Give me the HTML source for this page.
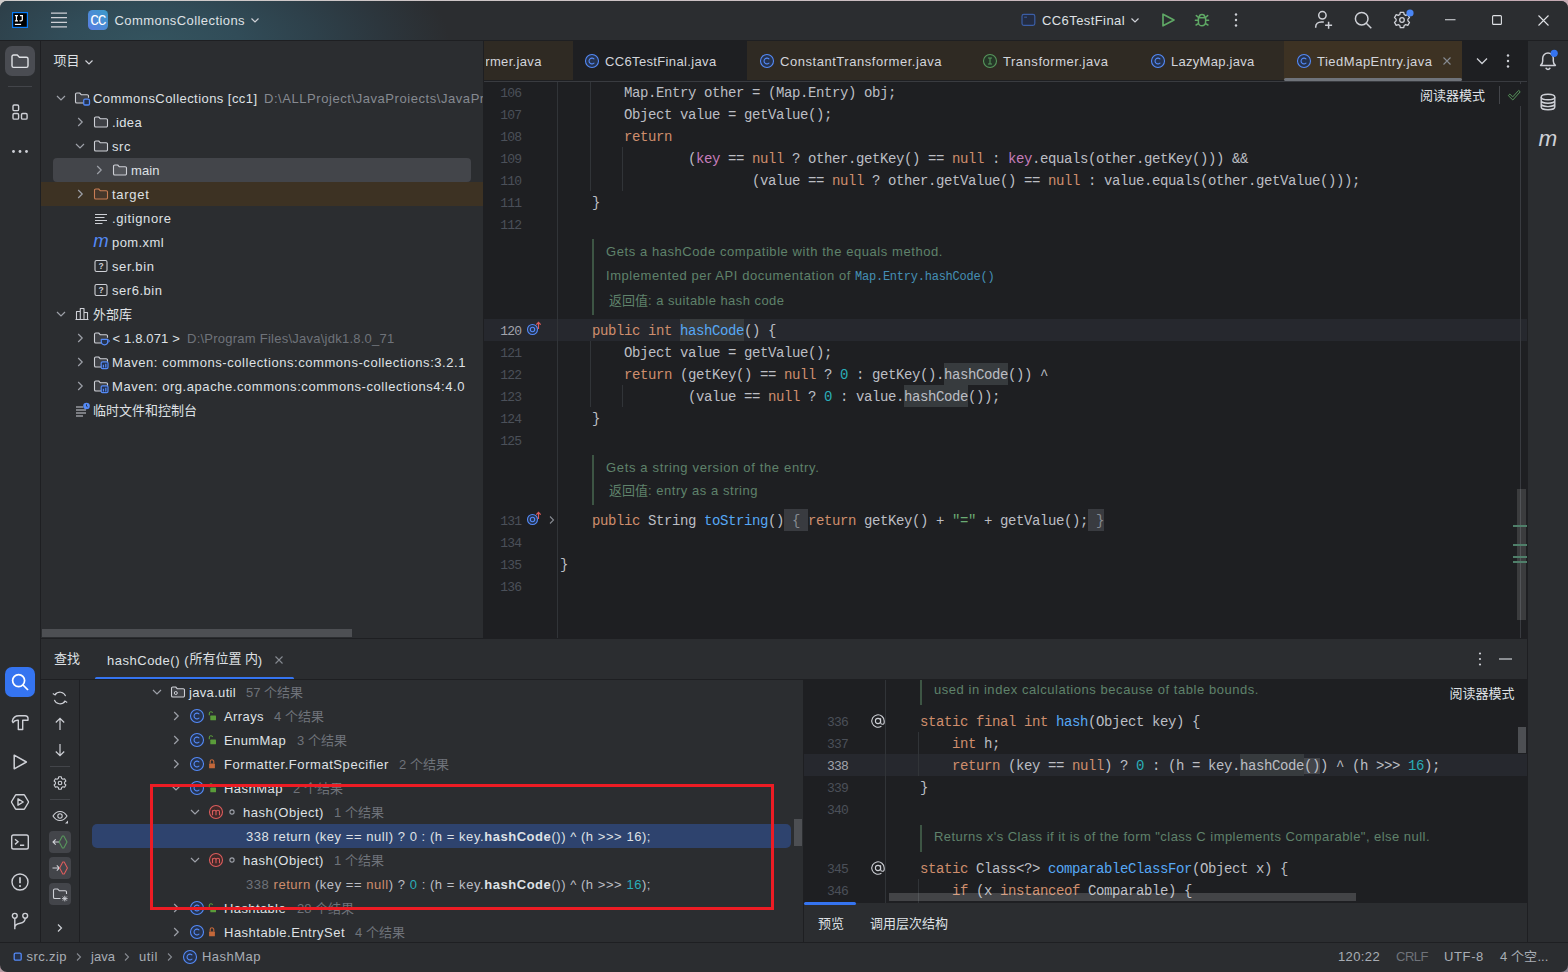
<!DOCTYPE html>
<html><head><meta charset="utf-8"><title>IDE</title><style>
html,body{margin:0;padding:0}
body{width:1568px;height:972px;background:linear-gradient(90deg,#d0cdcc 0,#cbbfc2 50%,#c4a9b2 100%) top/100% 8px no-repeat, linear-gradient(90deg,#b39aa2 0,#8c8292 100%);position:relative;overflow:hidden;font-family:"Liberation Sans", sans-serif;font-size:13px;color:#dfe1e5}
.t{position:absolute;white-space:pre;}
.s{font-family:"Liberation Sans", sans-serif}
.c{font-family:"Liberation Sans", "Noto Sans CJK SC", sans-serif;font-size:13px;line-height:20px}
.m{font-family:"Liberation Mono", monospace}
svg{overflow:visible}
.m i{display:inline-block;width:8px;text-align:center;font-style:normal} .m u{display:inline-block;width:6.975px;text-align:center;text-decoration:none}
.k{color:#cf8e6d} .f{color:#56a8f5} .n{color:#2aacb8} .st{color:#6aab73} .fl{color:#c77dbb}
.hl{background:#373b3e;padding:4px 0 2px} .hlw{background:#383b3d;padding:4px 0 2px} .fp{background:#393b40;color:#868a91;padding:4px 0 2px}
#win{position:absolute;left:0;top:0;width:1568px;height:972px;background:#2b2d30;clip-path:inset(1px 0 0 0 round 7px)}
</style></head><body><div id="win">
<div style="position:absolute;left:0px;top:0px;width:1568px;height:40px;background:radial-gradient(ellipse 300px 130px at 150px 46px,#34545f 0%,#314c58 30%,#2e414b 55%,#2c363d 78%,#2b2d30 100%);"></div>
<div style="position:absolute;left:0px;top:40px;width:1568px;height:1px;background:#1e1f22;"></div>
<div style="position:absolute;left:40px;top:41px;width:1px;height:901px;background:#1e1f22;"></div>
<div style="position:absolute;left:1527px;top:41px;width:1px;height:901px;background:#1e1f22;"></div>
<div style="position:absolute;left:484px;top:41px;width:1043px;height:597px;background:#1e1f22;"></div>
<div style="position:absolute;left:483px;top:41px;width:1px;height:597px;background:#1e1f22;"></div>
<div style="position:absolute;left:41px;top:638px;width:1487px;height:1px;background:#1e1f22;"></div>
<div style="position:absolute;left:0px;top:942px;width:1568px;height:1px;background:#1e1f22;"></div>
<svg style="position:absolute;left:12px;top:12px;" width="16" height="16" viewBox="0 0 16 16" fill="none"><rect x="0.600" y="0.600" width="14.800" height="14.800" fill="#000" stroke="#087cfa" stroke-width="1.200"/><path d="M2.900 3.600h3.100M4.450 3.600v5.200M2.900 8.800h3.100M7.900 3.600h3.100M10.300 3.600v3.800a1.400 1.400 0 0 1-1.400 1.400H7.500" stroke="#fff" stroke-width="1.200"/><rect x="2.900" y="11.800" width="6.200" height="1.200" fill="#fff"/></svg>
<svg style="position:absolute;left:51px;top:12px;" width="16" height="16" viewBox="0 0 16 16" fill="none"><path d="M0 1.100h16M0 5.700h16M0 10.300h16M0 14.900h16" stroke="#ced0d6" stroke-width="1.300"/></svg>
<div style="position:absolute;left:88px;top:10px;width:20px;height:20px;border-radius:4.5px;background:linear-gradient(45deg,#5a7de3,#3b9bc8)"></div>
<span id="t1" class="t m" style="left:90.3px;top:10.600000000000001px;line-height:20px;font-size:14.5px;color:#fff;letter-spacing:-1.203px;">CC</span>
<span id="t2" class="t s" style="left:114.5px;top:10.5px;line-height:20px;font-size:13px;color:#dfe1e5;letter-spacing:0.426px;">CommonsCollections</span>
<svg style="position:absolute;left:249px;top:14px;" width="12" height="12" viewBox="0 0 12 12" fill="none"><path d="M2.5 4.5l3.5 3.5 3.5-3.5" stroke="#ced0d6" stroke-width="1.2"/></svg>
<svg style="position:absolute;left:1021px;top:13px;" width="16" height="14" viewBox="0 0 16 14" fill="none"><rect x="1" y="1.400" width="12.800" height="11" rx="1.800" stroke="#3b5ea6" stroke-width="1.200" fill="#232c42"/><path d="M3.200 4.200h2.800" stroke="#3b5ea6" stroke-width="1"/></svg>
<span id="t3" class="t s" style="left:1042px;top:10.5px;line-height:20px;font-size:13px;color:#dfe1e5;letter-spacing:0.414px;">CC6TestFinal</span>
<svg style="position:absolute;left:1129px;top:14px;" width="12" height="12" viewBox="0 0 12 12" fill="none"><path d="M2.500 4.500l3.500 3.500 3.500-3.500" stroke="#ced0d6" stroke-width="1.200"/></svg>
<svg style="position:absolute;left:1160px;top:12px;" width="16" height="16" viewBox="0 0 16 16" fill="none"><path d="M3 2.200v11.600l11-5.800z" stroke="#5fa865" stroke-width="1.700" stroke-linejoin="round"/></svg>
<svg style="position:absolute;left:1194px;top:12px;" width="16" height="16" viewBox="0 0 16 16" fill="none"><path d="M5.300 5.200a2.700 2.700 0 0 1 5.400 0M4.400 5.700h7.200v4.500a3.600 3.600 0 0 1-7.200 0zM4.400 8.200H1.400M11.600 8.200h3M4.700 11.300l-2.600 1.700M11.300 11.300l2.600 1.700M4.600 5.500L2.300 3.600M11.400 5.500l2.300-1.900" stroke="#5fa865" stroke-width="1.500" stroke-linejoin="round" stroke-linecap="round"/></svg>
<svg style="position:absolute;left:1234px;top:13px;" width="4" height="14" viewBox="0 0 4 14" fill="none"><circle cx="2" cy="1.5" r="1.2" fill="#ced0d6"/><circle cx="2" cy="7" r="1.2" fill="#ced0d6"/><circle cx="2" cy="12.5" r="1.2" fill="#ced0d6"/></svg>
<svg style="position:absolute;left:1313px;top:10px;" width="20" height="20" viewBox="0 0 20 20" fill="none"><circle cx="9.400" cy="5.300" r="3.700" stroke="#ced0d6" stroke-width="1.500"/><path d="M2.700 17.800v-.8c0-3 2.300-5 5.600-5h2.500M15.600 11.800v7M12.100 15.300h7" stroke="#ced0d6" stroke-width="1.500"/></svg>
<svg style="position:absolute;left:1353px;top:10px;" width="20" height="20" viewBox="0 0 20 20" fill="none"><circle cx="8.700" cy="8.700" r="6.300" stroke="#ced0d6" stroke-width="1.500"/><path d="M13.300 13.300l5 5" stroke="#ced0d6" stroke-width="1.500"/></svg>
<svg style="position:absolute;left:1392px;top:10px;" width="20" height="20" viewBox="0 0 20 20" fill="none"><path d="M8.3 2.3h3.4l.5 2.2 1.5.9 2.1-.7 1.7 2.9-1.6 1.5v1.8l1.6 1.5-1.7 2.9-2.1-.7-1.5.9-.5 2.2H8.3l-.5-2.2-1.5-.9-2.1.7-1.7-2.9 1.6-1.5V9.100l-1.6-1.5 1.700-2.900 2.100.7 1.500-.9z" stroke="#ced0d6" stroke-width="1.3" stroke-linejoin="round"/><circle cx="10" cy="10" r="2.3" stroke="#ced0d6" stroke-width="1.3"/></svg>
<svg style="position:absolute;left:1405.7px;top:9.4px;" width="8" height="8" viewBox="0 0 8 8" fill="none"><circle cx="4" cy="4" r="3.600" fill="#4a86f5"/></svg>
<svg style="position:absolute;left:1445px;top:19px;" width="11" height="2" viewBox="0 0 11 2" fill="none"><path d="M0 .7h10.5" stroke="#dfe1e5" stroke-width="1.1"/></svg>
<svg style="position:absolute;left:1492px;top:15px;" width="10" height="10" viewBox="0 0 10 10" fill="none"><rect x=".6" y=".6" width="8.800" height="8.800" rx="1" stroke="#dfe1e5" stroke-width="1.100"/></svg>
<svg style="position:absolute;left:1538px;top:15px;" width="11" height="11" viewBox="0 0 11 11" fill="none"><path d="M.5.5l10 10M10.500.5l-10 10" stroke="#dfe1e5" stroke-width="1.100"/></svg>
<div style="position:absolute;left:5px;top:46px;width:30px;height:30px;border-radius:7px;background:#4a4c52"></div>
<svg style="position:absolute;left:10px;top:51px;" width="20" height="20" viewBox="0 0 20 20" fill="none"><path d="M2 5.600a1.600 1.600 0 0 1 1.600-1.600h3.700l2.100 2.200h7a1.600 1.600 0 0 1 1.600 1.600v7a1.600 1.600 0 0 1-1.600 1.600H3.600A1.600 1.600 0 0 1 2 14.800z" stroke="#dfe1e5" stroke-width="1.400" stroke-linejoin="round"/></svg>
<div style="position:absolute;left:8px;top:86px;width:24px;height:1px;background:#43454a;"></div>
<svg style="position:absolute;left:10px;top:102px;" width="20" height="20" viewBox="0 0 20 20" fill="none"><rect x="3" y="3" width="5.600" height="5.600" rx="1.200" stroke="#ced0d6" stroke-width="1.400"/><rect x="3" y="11.500" width="5.600" height="5.600" rx="1.200" stroke="#ced0d6" stroke-width="1.400"/><rect x="11.500" y="11.500" width="5.600" height="5.600" rx="1.200" stroke="#ced0d6" stroke-width="1.400"/></svg>
<svg style="position:absolute;left:10px;top:141px;" width="20" height="20" viewBox="0 0 20 20" fill="none"><circle cx="3.500" cy="10.500" r="1.400" fill="#ced0d6"/><circle cx="10" cy="10.500" r="1.400" fill="#ced0d6"/><circle cx="16.500" cy="10.500" r="1.400" fill="#ced0d6"/></svg>
<div style="position:absolute;left:5px;top:667px;width:30px;height:30px;border-radius:7px;background:#3574f0"></div>
<svg style="position:absolute;left:10px;top:672px;" width="20" height="20" viewBox="0 0 20 20" fill="none"><circle cx="8.600" cy="8.600" r="6" stroke="#fff" stroke-width="1.700"/><path d="M13 13l5 5" stroke="#fff" stroke-width="1.700"/></svg>
<svg style="position:absolute;left:10px;top:712px;" width="20" height="20" viewBox="0 0 20 20" fill="none"><path d="M2.300 9.200C3 5.800 5.600 3.800 9 3.800h6.300c1.500 0 2.400.800 2.700 2.200v2.300h-5.300v9.200H8.300V8.300H7.200c-1.800 0-3.300.900-4.100 2.300z" stroke="#ced0d6" stroke-width="1.400" stroke-linejoin="round"/></svg>
<svg style="position:absolute;left:10px;top:752px;" width="20" height="20" viewBox="0 0 20 20" fill="none"><path d="M4.200 3.200v13.600L16.400 10z" stroke="#ced0d6" stroke-width="1.500" stroke-linejoin="round"/></svg>
<svg style="position:absolute;left:10px;top:792px;" width="20" height="20" viewBox="0 0 20 20" fill="none"><path d="M6.200 2.800h7.600a1 1 0 0 1 .87.500l3.700 6.200a1 1 0 0 1 0 1l-3.700 6.200a1 1 0 0 1-.87.500H6.200a1 1 0 0 1-.87-.500L1.630 10.500a1 1 0 0 1 0-1l3.700-6.200a1 1 0 0 1 .87-.500z" stroke="#ced0d6" stroke-width="1.400"/><path d="M8 6.800v6.400l5.200-3.200z" stroke="#ced0d6" stroke-width="1.400" stroke-linejoin="round"/></svg>
<svg style="position:absolute;left:10px;top:832px;" width="20" height="20" viewBox="0 0 20 20" fill="none"><rect x="1.700" y="3" width="16.600" height="14" rx="1.800" stroke="#ced0d6" stroke-width="1.400"/><path d="M5 7.200l3 2.600-3 2.600M10 13.200h4.200" stroke="#ced0d6" stroke-width="1.400"/></svg>
<svg style="position:absolute;left:10px;top:872px;" width="20" height="20" viewBox="0 0 20 20" fill="none"><circle cx="10" cy="10" r="8" stroke="#ced0d6" stroke-width="1.400"/><path d="M10 5.200v6" stroke="#ced0d6" stroke-width="1.700"/><circle cx="10" cy="14" r="1.100" fill="#ced0d6"/></svg>
<svg style="position:absolute;left:10px;top:911px;" width="20" height="20" viewBox="0 0 20 20" fill="none"><circle cx="4.800" cy="4.800" r="2.400" stroke="#ced0d6" stroke-width="1.400"/><circle cx="15.200" cy="4.800" r="2.400" stroke="#ced0d6" stroke-width="1.400"/><path d="M4.800 7.200v11M15.200 7.200c0 3.500-2 4.500-5 5-3 .500-5.400 1.200-5.400 4" stroke="#ced0d6" stroke-width="1.400"/></svg>
<span class="t c" style="left:53.5px;top:51.2px;color:#dfe1e5;">项目</span>
<svg style="position:absolute;left:83px;top:56px;" width="12" height="12" viewBox="0 0 12 12" fill="none"><path d="M2.500 4.500l3.500 3.500 3.500-3.500" stroke="#ced0d6" stroke-width="1.200"/></svg>
<div style="position:absolute;left:53px;top:158px;width:418px;height:24px;border-radius:4px;background:#43454a"></div>
<div style="position:absolute;left:41px;top:182px;width:442px;height:24px;background:#3d3223;"></div>
<svg style="position:absolute;left:53px;top:90px;" width="16" height="16" viewBox="0 0 16 16" fill="none"><path d="M4 6l4 4 4-4" stroke="#9da0a8" stroke-width="1.200"/></svg>
<svg style="position:absolute;left:74px;top:90px;" width="16" height="16" viewBox="0 0 16 16" fill="none"><path d="M1.500 4.300a1.300 1.300 0 0 1 1.300-1.300h2.900l1.700 1.800h5.800a1.300 1.300 0 0 1 1.300 1.300v6.900h-13z" fill="#3e4045"/><path d="M9.500 13H2.800a1.300 1.300 0 0 1-1.300-1.300V4.300A1.300 1.300 0 0 1 2.800 3h2.900l1.700 1.800h5.800a1.300 1.300 0 0 1 1.300 1.300v1.600" stroke="#ced0d6" stroke-width="1.100" stroke-linejoin="round"/><rect x="9.700" y="9.200" width="5.800" height="5.800" rx="1.300" stroke="#548af7" stroke-width="1.300" fill="#25324d"/></svg>
<span id="t4" class="t s" style="left:93px;top:89.0px;line-height:20px;font-size:13px;color:#dfe1e5;letter-spacing:0.442px;">CommonsCollections [cc1]</span>
<span id="t5" class="t s" style="left:264px;top:89.0px;line-height:20px;font-size:13px;color:#868a91;letter-spacing:0.559px;clip-path:inset(0 13px 0 0);">D:\ALLProject\JavaProiects\JavaProj</span>
<svg style="position:absolute;left:72px;top:114px;" width="16" height="16" viewBox="0 0 16 16" fill="none"><path d="M6.200 4l4 4-4 4" stroke="#9da0a8" stroke-width="1.200"/></svg>
<svg style="position:absolute;left:93px;top:114px;" width="16" height="16" viewBox="0 0 16 16" fill="none"><path d="M1.500 4.300a1.300 1.300 0 0 1 1.300-1.300h2.900l1.700 1.800h5.800a1.300 1.300 0 0 1 1.300 1.300v5.600a1.300 1.300 0 0 1-1.300 1.300H2.800a1.300 1.300 0 0 1-1.300-1.300z" stroke="#ced0d6" stroke-width="1.100" stroke-linejoin="round" fill="#3e4045"/></svg>
<span id="t6" class="t s" style="left:112px;top:113.0px;line-height:20px;font-size:13px;color:#dfe1e5;letter-spacing:0.359px;">.idea</span>
<svg style="position:absolute;left:72px;top:138px;" width="16" height="16" viewBox="0 0 16 16" fill="none"><path d="M4 6l4 4 4-4" stroke="#9da0a8" stroke-width="1.200"/></svg>
<svg style="position:absolute;left:93px;top:138px;" width="16" height="16" viewBox="0 0 16 16" fill="none"><path d="M1.500 4.300a1.300 1.300 0 0 1 1.300-1.300h2.900l1.700 1.800h5.800a1.300 1.300 0 0 1 1.300 1.300v5.600a1.300 1.300 0 0 1-1.300 1.300H2.800a1.300 1.300 0 0 1-1.300-1.300z" stroke="#ced0d6" stroke-width="1.100" stroke-linejoin="round" fill="#3e4045"/></svg>
<span id="t7" class="t s" style="left:112px;top:137.0px;line-height:20px;font-size:13px;color:#dfe1e5;letter-spacing:0.552px;">src</span>
<svg style="position:absolute;left:91px;top:162px;" width="16" height="16" viewBox="0 0 16 16" fill="none"><path d="M6.200 4l4 4-4 4" stroke="#9da0a8" stroke-width="1.200"/></svg>
<svg style="position:absolute;left:112px;top:162px;" width="16" height="16" viewBox="0 0 16 16" fill="none"><path d="M1.500 4.300a1.300 1.300 0 0 1 1.300-1.300h2.900l1.700 1.800h5.800a1.300 1.300 0 0 1 1.300 1.300v5.600a1.300 1.300 0 0 1-1.300 1.300H2.800a1.300 1.300 0 0 1-1.300-1.300z" stroke="#ced0d6" stroke-width="1.100" stroke-linejoin="round" fill="#53555a"/></svg>
<span id="t8" class="t s" style="left:131px;top:161.0px;line-height:20px;font-size:13px;color:#dfe1e5;letter-spacing:0.078px;">main</span>
<svg style="position:absolute;left:72px;top:186px;" width="16" height="16" viewBox="0 0 16 16" fill="none"><path d="M6.200 4l4 4-4 4" stroke="#9da0a8" stroke-width="1.200"/></svg>
<svg style="position:absolute;left:93px;top:186px;" width="16" height="16" viewBox="0 0 16 16" fill="none"><path d="M1.500 4.300a1.300 1.300 0 0 1 1.300-1.300h2.900l1.700 1.800h5.800a1.300 1.300 0 0 1 1.300 1.300v5.600a1.300 1.300 0 0 1-1.300 1.300H2.800a1.300 1.300 0 0 1-1.300-1.300z" stroke="#c77d55" stroke-width="1.100" stroke-linejoin="round" fill="#45372b"/></svg>
<span id="t9" class="t s" style="left:112px;top:185.0px;line-height:20px;font-size:13px;color:#dfe1e5;letter-spacing:0.708px;">target</span>
<svg style="position:absolute;left:93px;top:210px;" width="16" height="16" viewBox="0 0 16 16" fill="none"><path d="M2 4.500h12M2 7.500h9.500M2 10.500h12M2 13.500h7.500" stroke="#ced0d6" stroke-width="1"/></svg>
<span id="t10" class="t s" style="left:112px;top:209.0px;line-height:20px;font-size:13px;color:#dfe1e5;letter-spacing:0.602px;">.gitignore</span>
<span id="t11" class="t s" style="left:93.3px;top:231.3px;line-height:20px;font-size:18.5px;color:#548af7;letter-spacing:0.078px;font-style:italic;">m</span>
<span id="t12" class="t s" style="left:112px;top:233.0px;line-height:20px;font-size:13px;color:#dfe1e5;letter-spacing:0.411px;">pom.xml</span>
<svg style="position:absolute;left:93px;top:258px;" width="16" height="16" viewBox="0 0 16 16" fill="none"><rect x="2" y="2.500" width="12" height="11" rx="1.500" stroke="#ced0d6" stroke-width="1.100"/><text x="5.400" y="11.300" font-family="Liberation Sans" font-weight="bold" font-size="8.500" fill="#ced0d6">?</text></svg>
<span id="t13" class="t s" style="left:112px;top:257.0px;line-height:20px;font-size:13px;color:#dfe1e5;letter-spacing:0.598px;">ser.bin</span>
<svg style="position:absolute;left:93px;top:282px;" width="16" height="16" viewBox="0 0 16 16" fill="none"><rect x="2" y="2.500" width="12" height="11" rx="1.500" stroke="#ced0d6" stroke-width="1.100"/><text x="5.400" y="11.300" font-family="Liberation Sans" font-weight="bold" font-size="8.500" fill="#ced0d6">?</text></svg>
<span id="t14" class="t s" style="left:112px;top:281.0px;line-height:20px;font-size:13px;color:#dfe1e5;letter-spacing:0.531px;">ser6.bin</span>
<svg style="position:absolute;left:53px;top:306px;" width="16" height="16" viewBox="0 0 16 16" fill="none"><path d="M4 6l4 4 4-4" stroke="#9da0a8" stroke-width="1.200"/></svg>
<svg style="position:absolute;left:74px;top:306px;" width="16" height="16" viewBox="0 0 16 16" fill="none"><path d="M2.500 13.500v-8h3.800v8M6.300 13.500V2.500h3.700v11M10 13.500V6.500h3.500v7M1.500 13.500h13" stroke="#ced0d6" stroke-width="1.100" stroke-linejoin="round"/></svg>
<span class="t c" style="left:93px;top:304.7px;color:#dfe1e5;">外部库</span>
<svg style="position:absolute;left:72px;top:330px;" width="16" height="16" viewBox="0 0 16 16" fill="none"><path d="M6.200 4l4 4-4 4" stroke="#9da0a8" stroke-width="1.200"/></svg>
<svg style="position:absolute;left:93px;top:330px;" width="16" height="16" viewBox="0 0 16 16" fill="none"><path d="M1.500 4.300a1.300 1.300 0 0 1 1.300-1.300h2.900l1.700 1.800h5.800a1.300 1.300 0 0 1 1.300 1.300v6.900h-13z" fill="#3e4045"/><path d="M9.500 13H2.800a1.300 1.300 0 0 1-1.300-1.300V4.300A1.300 1.300 0 0 1 2.800 3h2.900l1.700 1.800h5.800a1.300 1.300 0 0 1 1.300 1.300v1.600" stroke="#ced0d6" stroke-width="1.100" stroke-linejoin="round"/><path d="M8.300 9.300h6.400v2.300a3.200 3.200 0 0 1-6.400 0z" stroke="#548af7" stroke-width="1.200" fill="#25324d" stroke-linejoin="round"/><path d="M14.700 10h.7a1 1 0 0 1 0 2h-.7" stroke="#548af7" stroke-width="1"/></svg>
<span id="t15" class="t s" style="left:112.5px;top:329.0px;line-height:20px;font-size:13px;color:#dfe1e5;letter-spacing:0.156px;">&lt; 1.8.071 &gt;</span>
<span id="t16" class="t s" style="left:187px;top:329.0px;line-height:20px;font-size:13px;color:#6f737a;letter-spacing:0.244px;">D:\Program Files\Java\jdk1.8.0_71</span>
<svg style="position:absolute;left:72px;top:354px;" width="16" height="16" viewBox="0 0 16 16" fill="none"><path d="M6.200 4l4 4-4 4" stroke="#9da0a8" stroke-width="1.200"/></svg>
<svg style="position:absolute;left:93px;top:354px;" width="16" height="16" viewBox="0 0 16 16" fill="none"><path d="M1.500 4.300a1.300 1.300 0 0 1 1.300-1.300h2.900l1.700 1.800h5.800a1.300 1.300 0 0 1 1.300 1.300v6.900h-13z" fill="#3e4045"/><path d="M9.500 13H2.800a1.300 1.300 0 0 1-1.300-1.300V4.300A1.300 1.300 0 0 1 2.800 3h2.900l1.700 1.800h5.800a1.300 1.300 0 0 1 1.300 1.300v1.600" stroke="#ced0d6" stroke-width="1.100" stroke-linejoin="round"/><rect x="8.200" y="7.800" width="6.800" height="6.800" rx="1.300" stroke="#548af7" stroke-width="1.200" fill="#25324d"/><path d="M10.400 10.800v2.600M12.800 9.700v3.700" stroke="#548af7" stroke-width="1.200"/></svg>
<span id="t17" class="t s" style="left:112px;top:353.0px;line-height:20px;font-size:13px;color:#dfe1e5;letter-spacing:0.555px;">Maven: commons-collections:commons-collections:3.2.1</span>
<svg style="position:absolute;left:72px;top:378px;" width="16" height="16" viewBox="0 0 16 16" fill="none"><path d="M6.200 4l4 4-4 4" stroke="#9da0a8" stroke-width="1.200"/></svg>
<svg style="position:absolute;left:93px;top:378px;" width="16" height="16" viewBox="0 0 16 16" fill="none"><path d="M1.500 4.300a1.300 1.300 0 0 1 1.300-1.300h2.900l1.700 1.800h5.800a1.300 1.300 0 0 1 1.300 1.300v6.900h-13z" fill="#3e4045"/><path d="M9.500 13H2.800a1.300 1.300 0 0 1-1.300-1.300V4.300A1.300 1.300 0 0 1 2.800 3h2.900l1.700 1.800h5.800a1.300 1.300 0 0 1 1.300 1.300v1.600" stroke="#ced0d6" stroke-width="1.100" stroke-linejoin="round"/><rect x="8.200" y="7.800" width="6.800" height="6.800" rx="1.300" stroke="#548af7" stroke-width="1.200" fill="#25324d"/><path d="M10.400 10.800v2.600M12.800 9.700v3.700" stroke="#548af7" stroke-width="1.200"/></svg>
<span id="t18" class="t s" style="left:112px;top:377.0px;line-height:20px;font-size:13px;color:#dfe1e5;letter-spacing:0.557px;">Maven: org.apache.commons:commons-collections4:4.0</span>
<svg style="position:absolute;left:74px;top:402px;" width="16" height="16" viewBox="0 0 16 16" fill="none"><path d="M2 5h7M2 8h10M2 11h10M2 14h7" stroke="#ced0d6" stroke-width="1.100"/><circle cx="12.500" cy="4" r="3.300" fill="#548af7"/><path d="M12.500 2.300v1.900l1.200.7" stroke="#2b2d30" stroke-width=".9"/></svg>
<span class="t c" style="left:93px;top:400.7px;color:#dfe1e5;">临时文件和控制台</span>
<div style="position:absolute;left:42px;top:629px;width:310px;height:8px;background:#4d4f53;"></div>
<div style="position:absolute;left:484px;top:41px;width:89px;height:39px;background:#2f2a23;"></div>
<div style="position:absolute;left:747px;top:41px;width:537px;height:39px;background:#2f2a23;"></div>
<div style="position:absolute;left:1284px;top:41px;width:178px;height:39px;background:#3d3223;"></div>
<div style="position:absolute;left:484px;top:81px;width:1043px;height:1px;background:#393b40;"></div>
<div style="position:absolute;left:1284px;top:78px;width:178px;height:3px;background:#6f737a;border-radius:1.500px"></div>
<span id="t19" class="t s" style="left:485.3px;top:52.0px;line-height:20px;font-size:13px;color:#d3d5db;letter-spacing:0.326px;clip-path:inset(0 0 0 0.7px);">rmer.java</span>
<svg style="position:absolute;left:583.5px;top:53px;" width="16" height="16" viewBox="0 0 16 16" fill="none"><circle cx="8" cy="8" r="6.500" stroke="#548af7" stroke-width="1.100" fill="#25324d"/><path d="M10.300 6.300a2.900 2.900 0 1 0 0 3.400" stroke="#548af7" stroke-width="1.100"/></svg>
<span id="t20" class="t s" style="left:605px;top:52.0px;line-height:20px;font-size:13px;color:#d3d5db;letter-spacing:0.353px;">CC6TestFinal.java</span>
<svg style="position:absolute;left:759px;top:53px;" width="16" height="16" viewBox="0 0 16 16" fill="none"><circle cx="8" cy="8" r="6.500" stroke="#548af7" stroke-width="1.100" fill="#25324d"/><path d="M10.300 6.300a2.900 2.900 0 1 0 0 3.400" stroke="#548af7" stroke-width="1.100"/></svg>
<span id="t21" class="t s" style="left:780px;top:52.0px;line-height:20px;font-size:13px;color:#d3d5db;letter-spacing:0.538px;">ConstantTransformer.java</span>
<svg style="position:absolute;left:982px;top:53px;" width="16" height="16" viewBox="0 0 16 16" fill="none"><circle cx="8" cy="8" r="6.500" stroke="#57965c" stroke-width="1.100" fill="#253627"/><path d="M8 5v6M6 5h4M6 11h4" stroke="#57965c" stroke-width="1.100"/></svg>
<span id="t22" class="t s" style="left:1003px;top:52.0px;line-height:20px;font-size:13px;color:#d3d5db;letter-spacing:0.527px;">Transformer.java</span>
<svg style="position:absolute;left:1150px;top:53px;" width="16" height="16" viewBox="0 0 16 16" fill="none"><circle cx="8" cy="8" r="6.500" stroke="#548af7" stroke-width="1.100" fill="#25324d"/><path d="M10.300 6.300a2.900 2.900 0 1 0 0 3.400" stroke="#548af7" stroke-width="1.100"/></svg>
<span id="t23" class="t s" style="left:1171px;top:52.0px;line-height:20px;font-size:13px;color:#d3d5db;letter-spacing:0.273px;">LazyMap.java</span>
<svg style="position:absolute;left:1296px;top:53px;" width="16" height="16" viewBox="0 0 16 16" fill="none"><circle cx="8" cy="8" r="6.500" stroke="#548af7" stroke-width="1.100" fill="#25324d"/><path d="M10.300 6.300a2.900 2.900 0 1 0 0 3.400" stroke="#548af7" stroke-width="1.100"/></svg>
<span id="t24" class="t s" style="left:1317px;top:52.0px;line-height:20px;font-size:13px;color:#d3d5db;letter-spacing:0.504px;">TiedMapEntry.java</span>
<svg style="position:absolute;left:1442px;top:56px;" width="10" height="10" viewBox="0 0 10 10" fill="none"><path d="M1.500 1.500l7 7M8.500 1.500l-7 7" stroke="#868a91" stroke-width="1.100"/></svg>
<svg style="position:absolute;left:1474px;top:53px;" width="16" height="16" viewBox="0 0 16 16" fill="none"><path d="M3 5.500l5 5 5-5" stroke="#ced0d6" stroke-width="1.300"/></svg>
<svg style="position:absolute;left:1506px;top:54px;" width="4" height="14" viewBox="0 0 4 14" fill="none"><circle cx="2" cy="1.500" r="1.200" fill="#ced0d6"/><circle cx="2" cy="7" r="1.200" fill="#ced0d6"/><circle cx="2" cy="12.500" r="1.200" fill="#ced0d6"/></svg>
<div style="position:absolute;left:484px;top:319px;width:1043px;height:22px;background:#26282e;"></div>
<div style="position:absolute;left:557px;top:82px;width:1px;height:556px;background:#313438;"></div>
<div style="position:absolute;left:1520px;top:82px;width:1px;height:556px;background:#393b40;"></div>
<div style="position:absolute;left:590px;top:82px;width:1px;height:109px;background:#313438;"></div>
<div style="position:absolute;left:622px;top:147px;width:1px;height:44px;background:#313438;"></div>
<div style="position:absolute;left:590px;top:341px;width:1px;height:66px;background:#313438;"></div>
<div style="position:absolute;left:622px;top:385px;width:1px;height:22px;background:#313438;"></div>
<div style="position:absolute;left:592px;top:239px;width:2px;height:76px;background:#3d5544;"></div>
<div style="position:absolute;left:592px;top:455px;width:2px;height:50px;background:#3d5544;"></div>
<span id="t25" class="t m" style="left:491.20000000000005px;top:83.5px;line-height:20px;font-size:13px;color:#4b5059;width:30px;text-align:right;letter-spacing:-0.800px;">106</span>
<span id="t26" class="t m" style="left:560px;top:81.5px;line-height:22px;font-size:14px;color:#bcbec4;"><i> </i><i> </i><i> </i><i> </i><i> </i><i> </i><i> </i><i> </i><i>M</i><i>a</i><i>p</i><i>.</i><i>E</i><i>n</i><i>t</i><i>r</i><i>y</i><i> </i><i>o</i><i>t</i><i>h</i><i>e</i><i>r</i><i> </i><i>=</i><i> </i><i>(</i><i>M</i><i>a</i><i>p</i><i>.</i><i>E</i><i>n</i><i>t</i><i>r</i><i>y</i><i>)</i><i> </i><i>o</i><i>b</i><i>j</i><i>;</i></span>
<span id="t27" class="t m" style="left:491.20000000000005px;top:105.5px;line-height:20px;font-size:13px;color:#4b5059;width:30px;text-align:right;letter-spacing:-0.800px;">107</span>
<span id="t28" class="t m" style="left:560px;top:103.5px;line-height:22px;font-size:14px;color:#bcbec4;"><i> </i><i> </i><i> </i><i> </i><i> </i><i> </i><i> </i><i> </i><i>O</i><i>b</i><i>j</i><i>e</i><i>c</i><i>t</i><i> </i><i>v</i><i>a</i><i>l</i><i>u</i><i>e</i><i> </i><i>=</i><i> </i><i>g</i><i>e</i><i>t</i><i>V</i><i>a</i><i>l</i><i>u</i><i>e</i><i>(</i><i>)</i><i>;</i></span>
<span id="t29" class="t m" style="left:491.20000000000005px;top:127.5px;line-height:20px;font-size:13px;color:#4b5059;width:30px;text-align:right;letter-spacing:-0.800px;">108</span>
<span id="t30" class="t m" style="left:560px;top:125.5px;line-height:22px;font-size:14px;color:#bcbec4;"><i> </i><i> </i><i> </i><i> </i><i> </i><i> </i><i> </i><i> </i><span class="k"><i>r</i><i>e</i><i>t</i><i>u</i><i>r</i><i>n</i></span></span>
<span id="t31" class="t m" style="left:491.20000000000005px;top:149.5px;line-height:20px;font-size:13px;color:#4b5059;width:30px;text-align:right;letter-spacing:-0.800px;">109</span>
<span id="t32" class="t m" style="left:560px;top:147.5px;line-height:22px;font-size:14px;color:#bcbec4;"><i> </i><i> </i><i> </i><i> </i><i> </i><i> </i><i> </i><i> </i><i> </i><i> </i><i> </i><i> </i><i> </i><i> </i><i> </i><i> </i><i>(</i><span class="fl"><i>k</i><i>e</i><i>y</i></span><i> </i><i>=</i><i>=</i><i> </i><span class="k"><i>n</i><i>u</i><i>l</i><i>l</i></span><i> </i><i>?</i><i> </i><i>o</i><i>t</i><i>h</i><i>e</i><i>r</i><i>.</i><i>g</i><i>e</i><i>t</i><i>K</i><i>e</i><i>y</i><i>(</i><i>)</i><i> </i><i>=</i><i>=</i><i> </i><span class="k"><i>n</i><i>u</i><i>l</i><i>l</i></span><i> </i><i>:</i><i> </i><span class="fl"><i>k</i><i>e</i><i>y</i></span><i>.</i><i>e</i><i>q</i><i>u</i><i>a</i><i>l</i><i>s</i><i>(</i><i>o</i><i>t</i><i>h</i><i>e</i><i>r</i><i>.</i><i>g</i><i>e</i><i>t</i><i>K</i><i>e</i><i>y</i><i>(</i><i>)</i><i>)</i><i>)</i><i> </i><i>&amp;</i><i>&amp;</i></span>
<span id="t33" class="t m" style="left:491.20000000000005px;top:171.5px;line-height:20px;font-size:13px;color:#4b5059;width:30px;text-align:right;letter-spacing:-0.800px;">110</span>
<span id="t34" class="t m" style="left:560px;top:169.5px;line-height:22px;font-size:14px;color:#bcbec4;"><i> </i><i> </i><i> </i><i> </i><i> </i><i> </i><i> </i><i> </i><i> </i><i> </i><i> </i><i> </i><i> </i><i> </i><i> </i><i> </i><i> </i><i> </i><i> </i><i> </i><i> </i><i> </i><i> </i><i> </i><i>(</i><i>v</i><i>a</i><i>l</i><i>u</i><i>e</i><i> </i><i>=</i><i>=</i><i> </i><span class="k"><i>n</i><i>u</i><i>l</i><i>l</i></span><i> </i><i>?</i><i> </i><i>o</i><i>t</i><i>h</i><i>e</i><i>r</i><i>.</i><i>g</i><i>e</i><i>t</i><i>V</i><i>a</i><i>l</i><i>u</i><i>e</i><i>(</i><i>)</i><i> </i><i>=</i><i>=</i><i> </i><span class="k"><i>n</i><i>u</i><i>l</i><i>l</i></span><i> </i><i>:</i><i> </i><i>v</i><i>a</i><i>l</i><i>u</i><i>e</i><i>.</i><i>e</i><i>q</i><i>u</i><i>a</i><i>l</i><i>s</i><i>(</i><i>o</i><i>t</i><i>h</i><i>e</i><i>r</i><i>.</i><i>g</i><i>e</i><i>t</i><i>V</i><i>a</i><i>l</i><i>u</i><i>e</i><i>(</i><i>)</i><i>)</i><i>)</i><i>;</i></span>
<span id="t35" class="t m" style="left:491.20000000000005px;top:193.5px;line-height:20px;font-size:13px;color:#4b5059;width:30px;text-align:right;letter-spacing:-0.800px;">111</span>
<span id="t36" class="t m" style="left:560px;top:191.5px;line-height:22px;font-size:14px;color:#bcbec4;"><i> </i><i> </i><i> </i><i> </i><i>}</i></span>
<span id="t37" class="t m" style="left:491.20000000000005px;top:215.5px;line-height:20px;font-size:13px;color:#4b5059;width:30px;text-align:right;letter-spacing:-0.800px;">112</span>
<span id="t38" class="t s" style="left:606px;top:242.0px;line-height:20px;font-size:13px;color:#5f826b;letter-spacing:0.568px;">Gets a hashCode compatible with the equals method.</span>
<span id="t39" class="t s" style="left:606px;top:266.0px;line-height:20px;font-size:13px;color:#5f826b;letter-spacing:0.558px;">Implemented per API documentation of </span>
<span id="t40" class="t m" style="left:855px;top:266.5px;line-height:20px;font-size:12px;color:#4590b5;"><u>M</u><u>a</u><u>p</u><u>.</u><u>E</u><u>n</u><u>t</u><u>r</u><u>y</u><u>.</u><u>h</u><u>a</u><u>s</u><u>h</u><u>C</u><u>o</u><u>d</u><u>e</u><u>(</u><u>)</u></span>
<span class="t c" style="left:609px;top:290.7px;color:#5f826b;">返回值</span>
<span id="t41" class="t s" style="left:648px;top:291.0px;line-height:20px;font-size:13px;color:#5f826b;letter-spacing:0.455px;">: a suitable hash code</span>
<span id="t42" class="t m" style="left:491.20000000000005px;top:321.5px;line-height:20px;font-size:13px;color:#a1a3ab;width:30px;text-align:right;letter-spacing:-0.800px;">120</span>
<span id="t43" class="t m" style="left:560px;top:319.5px;line-height:22px;font-size:14px;color:#bcbec4;"><i> </i><i> </i><i> </i><i> </i><span class="k"><i>p</i><i>u</i><i>b</i><i>l</i><i>i</i><i>c</i></span><i> </i><span class="k"><i>i</i><i>n</i><i>t</i></span><i> </i><span class="hlw"><span class="f"><i>h</i><i>a</i><i>s</i><i>h</i><i>C</i><i>o</i><i>d</i><i>e</i></span></span><i>(</i><i>)</i><i> </i><i>{</i></span>
<span id="t44" class="t m" style="left:491.20000000000005px;top:343.5px;line-height:20px;font-size:13px;color:#4b5059;width:30px;text-align:right;letter-spacing:-0.800px;">121</span>
<span id="t45" class="t m" style="left:560px;top:341.5px;line-height:22px;font-size:14px;color:#bcbec4;"><i> </i><i> </i><i> </i><i> </i><i> </i><i> </i><i> </i><i> </i><i>O</i><i>b</i><i>j</i><i>e</i><i>c</i><i>t</i><i> </i><i>v</i><i>a</i><i>l</i><i>u</i><i>e</i><i> </i><i>=</i><i> </i><i>g</i><i>e</i><i>t</i><i>V</i><i>a</i><i>l</i><i>u</i><i>e</i><i>(</i><i>)</i><i>;</i></span>
<span id="t46" class="t m" style="left:491.20000000000005px;top:365.5px;line-height:20px;font-size:13px;color:#4b5059;width:30px;text-align:right;letter-spacing:-0.800px;">122</span>
<span id="t47" class="t m" style="left:560px;top:363.5px;line-height:22px;font-size:14px;color:#bcbec4;"><i> </i><i> </i><i> </i><i> </i><i> </i><i> </i><i> </i><i> </i><span class="k"><i>r</i><i>e</i><i>t</i><i>u</i><i>r</i><i>n</i></span><i> </i><i>(</i><i>g</i><i>e</i><i>t</i><i>K</i><i>e</i><i>y</i><i>(</i><i>)</i><i> </i><i>=</i><i>=</i><i> </i><span class="k"><i>n</i><i>u</i><i>l</i><i>l</i></span><i> </i><i>?</i><i> </i><span class="n"><i>0</i></span><i> </i><i>:</i><i> </i><i>g</i><i>e</i><i>t</i><i>K</i><i>e</i><i>y</i><i>(</i><i>)</i><i>.</i><span class="hl"><i>h</i><i>a</i><i>s</i><i>h</i><i>C</i><i>o</i><i>d</i><i>e</i></span><i>(</i><i>)</i><i>)</i><i> </i><i>^</i></span>
<span id="t48" class="t m" style="left:491.20000000000005px;top:387.5px;line-height:20px;font-size:13px;color:#4b5059;width:30px;text-align:right;letter-spacing:-0.800px;">123</span>
<span id="t49" class="t m" style="left:560px;top:385.5px;line-height:22px;font-size:14px;color:#bcbec4;"><i> </i><i> </i><i> </i><i> </i><i> </i><i> </i><i> </i><i> </i><i> </i><i> </i><i> </i><i> </i><i> </i><i> </i><i> </i><i> </i><i>(</i><i>v</i><i>a</i><i>l</i><i>u</i><i>e</i><i> </i><i>=</i><i>=</i><i> </i><span class="k"><i>n</i><i>u</i><i>l</i><i>l</i></span><i> </i><i>?</i><i> </i><span class="n"><i>0</i></span><i> </i><i>:</i><i> </i><i>v</i><i>a</i><i>l</i><i>u</i><i>e</i><i>.</i><span class="hl"><i>h</i><i>a</i><i>s</i><i>h</i><i>C</i><i>o</i><i>d</i><i>e</i></span><i>(</i><i>)</i><i>)</i><i>;</i></span>
<span id="t50" class="t m" style="left:491.20000000000005px;top:409.5px;line-height:20px;font-size:13px;color:#4b5059;width:30px;text-align:right;letter-spacing:-0.800px;">124</span>
<span id="t51" class="t m" style="left:560px;top:407.5px;line-height:22px;font-size:14px;color:#bcbec4;"><i> </i><i> </i><i> </i><i> </i><i>}</i></span>
<span id="t52" class="t m" style="left:491.20000000000005px;top:431.5px;line-height:20px;font-size:13px;color:#4b5059;width:30px;text-align:right;letter-spacing:-0.800px;">125</span>
<span id="t53" class="t s" style="left:606px;top:458.0px;line-height:20px;font-size:13px;color:#5f826b;letter-spacing:0.657px;">Gets a string version of the entry.</span>
<span class="t c" style="left:609px;top:480.7px;color:#5f826b;">返回值</span>
<span id="t54" class="t s" style="left:648px;top:481.0px;line-height:20px;font-size:13px;color:#5f826b;letter-spacing:0.541px;">: entry as a string</span>
<span id="t55" class="t m" style="left:491.20000000000005px;top:511.5px;line-height:20px;font-size:13px;color:#4b5059;width:30px;text-align:right;letter-spacing:-0.800px;">131</span>
<span id="t56" class="t m" style="left:560px;top:509.5px;line-height:22px;font-size:14px;color:#bcbec4;"><i> </i><i> </i><i> </i><i> </i><span class="k"><i>p</i><i>u</i><i>b</i><i>l</i><i>i</i><i>c</i></span><i> </i><i>S</i><i>t</i><i>r</i><i>i</i><i>n</i><i>g</i><i> </i><span class="f"><i>t</i><i>o</i><i>S</i><i>t</i><i>r</i><i>i</i><i>n</i><i>g</i></span><i>(</i><i>)</i><span class="fp"><i> </i><i>{</i><i> </i></span><span class="k"><i>r</i><i>e</i><i>t</i><i>u</i><i>r</i><i>n</i></span><i> </i><i>g</i><i>e</i><i>t</i><i>K</i><i>e</i><i>y</i><i>(</i><i>)</i><i> </i><i>+</i><i> </i><span class="st"><i>&quot;</i><i>=</i><i>&quot;</i></span><i> </i><i>+</i><i> </i><i>g</i><i>e</i><i>t</i><i>V</i><i>a</i><i>l</i><i>u</i><i>e</i><i>(</i><i>)</i><i>;</i><span class="fp"><i> </i><i>}</i></span></span>
<span id="t57" class="t m" style="left:491.20000000000005px;top:533.5px;line-height:20px;font-size:13px;color:#4b5059;width:30px;text-align:right;letter-spacing:-0.800px;">134</span>
<span id="t58" class="t m" style="left:491.20000000000005px;top:555.5px;line-height:20px;font-size:13px;color:#4b5059;width:30px;text-align:right;letter-spacing:-0.800px;">135</span>
<span id="t59" class="t m" style="left:560px;top:553.5px;line-height:22px;font-size:14px;color:#bcbec4;"><i>}</i></span>
<span id="t60" class="t m" style="left:491.20000000000005px;top:577.5px;line-height:20px;font-size:13px;color:#4b5059;width:30px;text-align:right;letter-spacing:-0.800px;">136</span>
<svg style="position:absolute;left:526px;top:321px;" width="16" height="16" viewBox="0 0 16 16" fill="none"><circle cx="6.500" cy="8.500" r="5" stroke="#548af7" stroke-width="1.100" fill="#25324d"/><circle cx="6.500" cy="8.500" r="2.200" stroke="#548af7" stroke-width="1.100"/><path d="M12.500 8V1.500M10.300 3.600l2.200-2.300 2.200 2.300" stroke="#db5c5c" stroke-width="1.200"/></svg>
<svg style="position:absolute;left:526px;top:511px;" width="16" height="16" viewBox="0 0 16 16" fill="none"><circle cx="6.500" cy="8.500" r="5" stroke="#548af7" stroke-width="1.100" fill="#25324d"/><circle cx="6.500" cy="8.500" r="2.200" stroke="#548af7" stroke-width="1.100"/><path d="M12.500 8V1.500M10.300 3.600l2.200-2.300 2.200 2.300" stroke="#db5c5c" stroke-width="1.200"/></svg>
<svg style="position:absolute;left:544px;top:512px;" width="16" height="16" viewBox="0 0 16 16" fill="none"><path d="M6 4.500l3.500 3.500-3.500 3.500" stroke="#868a91" stroke-width="1.100"/></svg>
<span class="t c" style="left:1420px;top:85.7px;color:#dfe1e5;">阅读器模式</span>
<div style="position:absolute;left:1499px;top:86px;width:1px;height:18px;background:#43454a;"></div>
<div style="position:absolute;left:1503px;top:84px;width:24px;height:22px;background:#1e1f22;"></div>
<svg style="position:absolute;left:1507px;top:88px;" width="14" height="14" viewBox="0 0 14 14" fill="none"><path d="M1.300 7.600l1.500-1.500 2.900 2.800 6-6.500 1.500 1.400-7.400 8.200z" stroke="#57965c" stroke-width="1" stroke-linejoin="round"/></svg>
<div style="position:absolute;left:1517px;top:489px;width:9px;height:131px;background:rgba(255,255,255,0.130);"></div>
<div style="position:absolute;left:1513px;top:525px;width:14px;height:2px;background:#4f7f6a;"></div>
<div style="position:absolute;left:1513px;top:544px;width:14px;height:2px;background:#4f7f6a;"></div>
<div style="position:absolute;left:1513px;top:556px;width:14px;height:2px;background:#4f7f6a;"></div>
<div style="position:absolute;left:1513px;top:561px;width:14px;height:2px;background:#4f7f6a;"></div>
<svg style="position:absolute;left:1538px;top:50px;" width="20" height="20" viewBox="0 0 20 20" fill="none"><path d="M2.600 15.400c1.400-1.100 2.100-2.500 2.100-4.500V8.300a5.300 5.300 0 0 1 10.600 0v2.600c0 2 .700 3.400 2.100 4.500zM7.800 17.800a2.300 2.300 0 0 0 4.400 0" stroke="#ced0d6" stroke-width="1.500" stroke-linejoin="round"/><circle cx="16.200" cy="3.300" r="3.600" fill="#3574f0"/></svg>
<svg style="position:absolute;left:1538px;top:91.5px;" width="20" height="20" viewBox="0 0 20 20" fill="none"><ellipse cx="10" cy="5" rx="6.800" ry="2.800" stroke="#ced0d6" stroke-width="1.400"/><path d="M3.200 5v10c0 1.500 3 2.800 6.800 2.800s6.800-1.300 6.800-2.800V5M3.200 8.400c0 1.500 3 2.800 6.800 2.800s6.800-1.300 6.800-2.800M3.200 11.800c0 1.500 3 2.800 6.800 2.800s6.800-1.300 6.800-2.800" stroke="#ced0d6" stroke-width="1.400"/></svg>
<span id="t61" class="t s" style="left:1538.5px;top:126.5px;line-height:24px;font-size:22.5px;color:#ced0d6;letter-spacing:0.250px;font-style:italic;">m</span>
<span class="t c" style="left:54px;top:649.2px;color:#dfe1e5;">查找</span>
<span id="t62" class="t s" style="left:107px;top:650.5px;line-height:20px;font-size:13px;color:#dfe1e5;letter-spacing:0.510px;">hashCode() (</span>
<span class="t c" style="left:189.4px;top:649.4px;color:#dfe1e5;">所有位置 内</span>
<span id="t63" class="t s" style="left:257.8px;top:650.5px;line-height:20px;font-size:13px;color:#dfe1e5;">)</span>
<svg style="position:absolute;left:274px;top:655px;" width="10" height="10" viewBox="0 0 10 10" fill="none"><path d="M1.500 1.500l7 7M8.500 1.500l-7 7" stroke="#868a91" stroke-width="1.100"/></svg>
<div style="position:absolute;left:95px;top:677px;width:199px;height:3px;border-radius:1.500px;background:#3574f0"></div>
<div style="position:absolute;left:41px;top:679px;width:1487px;height:1px;background:#1e1f22;"></div>
<svg style="position:absolute;left:1478px;top:652px;" width="4" height="14" viewBox="0 0 4 14" fill="none"><circle cx="2" cy="1.500" r="1.100" fill="#ced0d6"/><circle cx="2" cy="7" r="1.100" fill="#ced0d6"/><circle cx="2" cy="12.500" r="1.100" fill="#ced0d6"/></svg>
<svg style="position:absolute;left:1499px;top:658px;" width="14" height="2" viewBox="0 0 14 2" fill="none"><path d="M0 1h13" stroke="#ced0d6" stroke-width="1.200"/></svg>
<div style="position:absolute;left:79px;top:680px;width:1px;height:262px;background:#1e1f22;"></div>
<svg style="position:absolute;left:52px;top:690px;" width="16" height="16" viewBox="0 0 16 16" fill="none"><path d="M13.600 6.200A5.900 5.900 0 0 0 3.200 4.600M2.400 9.800a5.900 5.900 0 0 0 10.400 1.600" stroke="#ced0d6" stroke-width="1.100"/><path d="M.800 3.600l2.300 1.300 1.400-2.200M15.200 12.400l-2.300-1.300-1.400 2.200" stroke="#ced0d6" stroke-width="1.100"/></svg>
<svg style="position:absolute;left:52px;top:716px;" width="16" height="16" viewBox="0 0 16 16" fill="none"><path d="M8 14V2.500M3.800 6.500L8 2.300l4.200 4.200" stroke="#ced0d6" stroke-width="1.200"/></svg>
<svg style="position:absolute;left:52px;top:742px;" width="16" height="16" viewBox="0 0 16 16" fill="none"><path d="M8 2v11.500M3.800 9.500L8 13.700l4.200-4.200" stroke="#ced0d6" stroke-width="1.200"/></svg>
<div style="position:absolute;left:50px;top:766px;width:20px;height:1px;background:#43454a;"></div>
<svg style="position:absolute;left:52px;top:775px;" width="16" height="16" viewBox="0 0 16 16" fill="none"><path d="M6.700 1.800h2.600l.4 1.800 1.200.7 1.700-.6 1.300 2.300-1.300 1.200v1.600l1.300 1.200-1.300 2.300-1.700-.6-1.200.7-.4 1.800H6.700l-.4-1.800-1.200-.7-1.700.6-1.300-2.300 1.300-1.200V7.200L2.100 6l1.300-2.300 1.700.6 1.200-.7z" stroke="#ced0d6" stroke-width="1.100" stroke-linejoin="round"/><circle cx="8" cy="8" r="1.800" stroke="#ced0d6" stroke-width="1.100"/></svg>
<div style="position:absolute;left:50px;top:799px;width:20px;height:1px;background:#43454a;"></div>
<svg style="position:absolute;left:52px;top:808px;" width="16" height="16" viewBox="0 0 16 16" fill="none"><path d="M1 8c1.800-3 4.200-4.500 7-4.500s5.200 1.500 7 4.500c-1.800 3-4.200 4.500-7 4.500S2.800 11 1 8z" stroke="#ced0d6" stroke-width="1.100"/><circle cx="8" cy="8" r="2.200" stroke="#ced0d6" stroke-width="1.100"/><path d="M16 12.500v3h-3z" fill="#ced0d6"/></svg>
<div style="position:absolute;left:49px;top:831px;width:22px;height:22px;border-radius:4px;background:#43454a"></div>
<div style="position:absolute;left:49px;top:857px;width:22px;height:22px;border-radius:4px;background:#43454a"></div>
<div style="position:absolute;left:49px;top:883px;width:22px;height:22px;border-radius:4px;background:#43454a"></div>
<svg style="position:absolute;left:52px;top:834px;" width="16" height="16" viewBox="0 0 16 16" fill="none"><path d="M1 8h7M3.700 5.300L1 8l2.700 2.700" stroke="#ced0d6" stroke-width="1.100"/><path d="M10.400 2h1.400l3.200 6-3.200 6h-1.400L7.200 8z" stroke="#57965c" stroke-width="1.100" stroke-linejoin="round"/></svg>
<svg style="position:absolute;left:52px;top:860px;" width="16" height="16" viewBox="0 0 16 16" fill="none"><path d="M.500 8h7M4.800 5.300L7.500 8l-2.700 2.700" stroke="#ced0d6" stroke-width="1.100"/><path d="M10.800 2h1.400l3.200 6-3.200 6h-1.400L7.600 8z" stroke="#db5c5c" stroke-width="1.100" stroke-linejoin="round"/></svg>
<svg style="position:absolute;left:52px;top:886px;" width="16" height="16" viewBox="0 0 16 16" fill="none"><path d="M8.500 12.500H2.800a1.300 1.300 0 0 1-1.300-1.300V4.300A1.300 1.300 0 0 1 2.800 3h2.900l1.700 1.800h5.800a1.300 1.300 0 0 1 1.300 1.300v2" stroke="#ced0d6" stroke-width="1.100"/><path d="M12.800 9.800v5.600M10 12.600h5.600M10.800 10.600l4 4M14.800 10.600l-4 4" stroke="#ced0d6" stroke-width=".9"/></svg>
<svg style="position:absolute;left:52px;top:920px;" width="16" height="16" viewBox="0 0 16 16" fill="none"><path d="M6 4.500l3.500 3.500-3.500 3.500" stroke="#ced0d6" stroke-width="1.200"/></svg>
<div style="position:absolute;left:92px;top:824px;width:699px;height:24px;border-radius:5px;background:#2e436e"></div>
<svg style="position:absolute;left:149px;top:684px;" width="16" height="16" viewBox="0 0 16 16" fill="none"><path d="M4 6l4 4 4-4" stroke="#9da0a8" stroke-width="1.200"/></svg>
<svg style="position:absolute;left:170px;top:684px;" width="16" height="16" viewBox="0 0 16 16" fill="none"><path d="M1.500 4.300a1.300 1.300 0 0 1 1.300-1.300h2.900l1.700 1.800h5.800a1.300 1.300 0 0 1 1.300 1.300v5.600a1.300 1.300 0 0 1-1.300 1.300H2.800a1.300 1.300 0 0 1-1.300-1.300z" stroke="#ced0d6" stroke-width="1.100" stroke-linejoin="round" fill="#3e4045"/><circle cx="5.800" cy="9" r="1.500" stroke="#ced0d6" stroke-width="1"/></svg>
<span id="t64" class="t s" style="left:189px;top:683.0px;line-height:20px;font-size:13px;color:#dfe1e5;letter-spacing:0.325px;">java.util</span>
<span id="t65" class="t s" style="left:246px;top:683.0px;line-height:20px;font-size:13px;color:#6f737a;">57 </span>
<span class="t c" style="left:264px;top:682.7px;color:#6f737a;">个结果</span>
<svg style="position:absolute;left:168px;top:708px;" width="16" height="16" viewBox="0 0 16 16" fill="none"><path d="M6.200 4l4 4-4 4" stroke="#9da0a8" stroke-width="1.200"/></svg>
<svg style="position:absolute;left:189px;top:708px;" width="16" height="16" viewBox="0 0 16 16" fill="none"><circle cx="8" cy="8" r="6.500" stroke="#548af7" stroke-width="1.100" fill="#25324d"/><path d="M10.300 6.300a2.900 2.900 0 1 0 0 3.400" stroke="#548af7" stroke-width="1.100"/></svg>
<svg style="position:absolute;left:207px;top:710px;" width="10" height="12" viewBox="0 0 10 12" fill="none"><path d="M2.300 5.300V3.400a1.700 1.700 0 0 1 3.300-.5" stroke="#5a9c3a" stroke-width="1.100"/><rect x="3.300" y="5.600" width="5.700" height="4.700" rx=".6" fill="#5a9c3a"/></svg>
<span id="t66" class="t s" style="left:224px;top:707.0px;line-height:20px;font-size:13px;color:#dfe1e5;letter-spacing:0.406px;">Arrays</span>
<span id="t67" class="t s" style="left:274px;top:707.0px;line-height:20px;font-size:13px;color:#6f737a;">4 </span>
<span class="t c" style="left:285px;top:706.7px;color:#6f737a;">个结果</span>
<svg style="position:absolute;left:168px;top:732px;" width="16" height="16" viewBox="0 0 16 16" fill="none"><path d="M6.200 4l4 4-4 4" stroke="#9da0a8" stroke-width="1.200"/></svg>
<svg style="position:absolute;left:189px;top:732px;" width="16" height="16" viewBox="0 0 16 16" fill="none"><circle cx="8" cy="8" r="6.500" stroke="#548af7" stroke-width="1.100" fill="#25324d"/><path d="M10.300 6.300a2.900 2.900 0 1 0 0 3.400" stroke="#548af7" stroke-width="1.100"/></svg>
<svg style="position:absolute;left:207px;top:734px;" width="10" height="12" viewBox="0 0 10 12" fill="none"><path d="M2.300 5.300V3.400a1.700 1.700 0 0 1 3.300-.5" stroke="#5a9c3a" stroke-width="1.100"/><rect x="3.300" y="5.600" width="5.700" height="4.700" rx=".6" fill="#5a9c3a"/></svg>
<span id="t68" class="t s" style="left:224px;top:731.0px;line-height:20px;font-size:13px;color:#dfe1e5;letter-spacing:0.393px;">EnumMap</span>
<span id="t69" class="t s" style="left:297px;top:731.0px;line-height:20px;font-size:13px;color:#6f737a;">3 </span>
<span class="t c" style="left:308px;top:730.7px;color:#6f737a;">个结果</span>
<svg style="position:absolute;left:168px;top:756px;" width="16" height="16" viewBox="0 0 16 16" fill="none"><path d="M6.200 4l4 4-4 4" stroke="#9da0a8" stroke-width="1.200"/></svg>
<svg style="position:absolute;left:189px;top:756px;" width="16" height="16" viewBox="0 0 16 16" fill="none"><circle cx="8" cy="8" r="6.500" stroke="#548af7" stroke-width="1.100" fill="#25324d"/><path d="M10.300 6.300a2.900 2.900 0 1 0 0 3.400" stroke="#548af7" stroke-width="1.100"/></svg>
<svg style="position:absolute;left:207px;top:758px;" width="10" height="12" viewBox="0 0 10 12" fill="none"><path d="M3.200 5.500V3.600a1.800 1.800 0 0 1 3.600 0v1.900" stroke="#c4683a" stroke-width="1.100"/><rect x="2.100" y="5.600" width="5.800" height="4.700" rx=".6" fill="#c4683a"/></svg>
<span id="t70" class="t s" style="left:224px;top:755.0px;line-height:20px;font-size:13px;color:#dfe1e5;letter-spacing:0.560px;">Formatter.FormatSpecifier</span>
<span id="t71" class="t s" style="left:399px;top:755.0px;line-height:20px;font-size:13px;color:#6f737a;">2 </span>
<span class="t c" style="left:410px;top:754.7px;color:#6f737a;">个结果</span>
<svg style="position:absolute;left:168px;top:780px;" width="16" height="16" viewBox="0 0 16 16" fill="none"><path d="M4 6l4 4 4-4" stroke="#9da0a8" stroke-width="1.200"/></svg>
<svg style="position:absolute;left:189px;top:780px;" width="16" height="16" viewBox="0 0 16 16" fill="none"><circle cx="8" cy="8" r="6.500" stroke="#548af7" stroke-width="1.100" fill="#25324d"/><path d="M10.300 6.300a2.900 2.900 0 1 0 0 3.400" stroke="#548af7" stroke-width="1.100"/></svg>
<svg style="position:absolute;left:207px;top:782px;" width="10" height="12" viewBox="0 0 10 12" fill="none"><path d="M2.300 5.300V3.400a1.700 1.700 0 0 1 3.300-.5" stroke="#5a9c3a" stroke-width="1.100"/><rect x="3.300" y="5.600" width="5.700" height="4.700" rx=".6" fill="#5a9c3a"/></svg>
<span id="t72" class="t s" style="left:224px;top:779.0px;line-height:20px;font-size:13px;color:#dfe1e5;letter-spacing:0.480px;">HashMap</span>
<span id="t73" class="t s" style="left:293px;top:779.0px;line-height:20px;font-size:13px;color:#6f737a;">2 </span>
<span class="t c" style="left:304px;top:778.7px;color:#6f737a;">个结果</span>
<svg style="position:absolute;left:187px;top:804px;" width="16" height="16" viewBox="0 0 16 16" fill="none"><path d="M4 6l4 4 4-4" stroke="#9da0a8" stroke-width="1.200"/></svg>
<svg style="position:absolute;left:208px;top:804px;" width="16" height="16" viewBox="0 0 16 16" fill="none"><circle cx="8" cy="8" r="6.500" stroke="#db5c5c" stroke-width="1.100" fill="#402929"/><path d="M4.500 11.200V6.300M4.500 7.800c.400-2 3.500-2 3.500 0v3.400M8 7.800c.400-2 3.500-2 3.500 0v3.400" stroke="#db5c5c" stroke-width="1.100"/></svg>
<svg style="position:absolute;left:228px;top:808px;" width="8" height="8" viewBox="0 0 8 8" fill="none"><circle cx="4" cy="4" r="2.100" stroke="#9da0a8" stroke-width="1.100"/></svg>
<span id="t74" class="t s" style="left:243px;top:803.0px;line-height:20px;font-size:13px;color:#dfe1e5;letter-spacing:0.548px;">hash(Object)</span>
<span id="t75" class="t s" style="left:334px;top:803.0px;line-height:20px;font-size:13px;color:#6f737a;">1 </span>
<span class="t c" style="left:345px;top:802.7px;color:#6f737a;">个结果</span>
<span id="t76" class="t s" style="left:246px;top:827.0px;line-height:20px;font-size:13px;color:#dfe1e5;letter-spacing:0.549px;">338 return (key == null) ? 0 : (h = key.<b>hashCode</b>()) ^ (h &gt;&gt;&gt; 16);</span>
<svg style="position:absolute;left:187px;top:852px;" width="16" height="16" viewBox="0 0 16 16" fill="none"><path d="M4 6l4 4 4-4" stroke="#9da0a8" stroke-width="1.200"/></svg>
<svg style="position:absolute;left:208px;top:852px;" width="16" height="16" viewBox="0 0 16 16" fill="none"><circle cx="8" cy="8" r="6.500" stroke="#db5c5c" stroke-width="1.100" fill="#402929"/><path d="M4.500 11.200V6.300M4.500 7.800c.400-2 3.500-2 3.500 0v3.400M8 7.800c.400-2 3.500-2 3.500 0v3.400" stroke="#db5c5c" stroke-width="1.100"/></svg>
<svg style="position:absolute;left:228px;top:856px;" width="8" height="8" viewBox="0 0 8 8" fill="none"><circle cx="4" cy="4" r="2.100" stroke="#9da0a8" stroke-width="1.100"/></svg>
<span id="t77" class="t s" style="left:243px;top:851.0px;line-height:20px;font-size:13px;color:#dfe1e5;letter-spacing:0.548px;">hash(Object)</span>
<span id="t78" class="t s" style="left:334px;top:851.0px;line-height:20px;font-size:13px;color:#6f737a;">1 </span>
<span class="t c" style="left:345px;top:850.7px;color:#6f737a;">个结果</span>
<span id="t79" class="t s" style="left:246px;top:875.0px;line-height:20px;font-size:13px;color:#bcbec4;letter-spacing:0.548px;"><span style="color:#6f737a">338</span> <span class="k">return</span> (key == <span class="k">null</span>) ? <span class="n">0</span> : (h = key.<b style="color:#dfe1e5">hashCode</b>()) ^ (h &gt;&gt;&gt; <span class="n">16</span>);</span>
<svg style="position:absolute;left:168px;top:900px;" width="16" height="16" viewBox="0 0 16 16" fill="none"><path d="M6.200 4l4 4-4 4" stroke="#9da0a8" stroke-width="1.200"/></svg>
<svg style="position:absolute;left:189px;top:900px;" width="16" height="16" viewBox="0 0 16 16" fill="none"><circle cx="8" cy="8" r="6.500" stroke="#548af7" stroke-width="1.100" fill="#25324d"/><path d="M10.300 6.300a2.900 2.900 0 1 0 0 3.400" stroke="#548af7" stroke-width="1.100"/></svg>
<svg style="position:absolute;left:207px;top:902px;" width="10" height="12" viewBox="0 0 10 12" fill="none"><path d="M2.300 5.300V3.400a1.700 1.700 0 0 1 3.300-.5" stroke="#5a9c3a" stroke-width="1.100"/><rect x="3.300" y="5.600" width="5.700" height="4.700" rx=".6" fill="#5a9c3a"/></svg>
<span id="t80" class="t s" style="left:224px;top:899.0px;line-height:20px;font-size:13px;color:#dfe1e5;letter-spacing:0.384px;">Hashtable</span>
<span id="t81" class="t s" style="left:297px;top:899.0px;line-height:20px;font-size:13px;color:#6f737a;">28 </span>
<span class="t c" style="left:315px;top:898.7px;color:#6f737a;">个结果</span>
<svg style="position:absolute;left:168px;top:924px;" width="16" height="16" viewBox="0 0 16 16" fill="none"><path d="M6.200 4l4 4-4 4" stroke="#9da0a8" stroke-width="1.200"/></svg>
<svg style="position:absolute;left:189px;top:924px;" width="16" height="16" viewBox="0 0 16 16" fill="none"><circle cx="8" cy="8" r="6.500" stroke="#548af7" stroke-width="1.100" fill="#25324d"/><path d="M10.300 6.300a2.900 2.900 0 1 0 0 3.400" stroke="#548af7" stroke-width="1.100"/></svg>
<svg style="position:absolute;left:207px;top:926px;" width="10" height="12" viewBox="0 0 10 12" fill="none"><path d="M3.200 5.500V3.600a1.800 1.800 0 0 1 3.600 0v1.900" stroke="#c4683a" stroke-width="1.100"/><rect x="2.100" y="5.600" width="5.800" height="4.700" rx=".6" fill="#c4683a"/></svg>
<span id="t82" class="t s" style="left:224px;top:923.0px;line-height:20px;font-size:13px;color:#dfe1e5;letter-spacing:0.499px;">Hashtable.EntrySet</span>
<span id="t83" class="t s" style="left:355px;top:923.0px;line-height:20px;font-size:13px;color:#6f737a;">4 </span>
<span class="t c" style="left:366px;top:922.7px;color:#6f737a;">个结果</span>
<div style="position:absolute;left:794px;top:819px;width:8px;height:27px;background:#4d4f53;"></div>
<div style="position:absolute;left:150px;top:784px;width:624px;height:126px;box-sizing:border-box;border:3px solid #ed1c24"></div>
<div style="position:absolute;left:803px;top:680px;width:1px;height:262px;background:#1e1f22;"></div>
<div style="position:absolute;left:804px;top:680px;width:723px;height:223px;background:#1e1f22;"></div>
<div style="position:absolute;left:804px;top:754px;width:723px;height:22px;background:#26282e;"></div>
<div style="position:absolute;left:885px;top:680px;width:1px;height:223px;background:#313438;"></div>
<div style="position:absolute;left:918px;top:732px;width:1px;height:44px;background:#313438;"></div>
<div style="position:absolute;left:918px;top:879px;width:1px;height:24px;background:#313438;"></div>
<div style="position:absolute;left:920px;top:680px;width:2px;height:25px;background:#3d5544;"></div>
<div style="position:absolute;left:920px;top:825px;width:2px;height:27px;background:#3d5544;"></div>
<span id="t84" class="t s" style="left:934px;top:680.0px;line-height:20px;font-size:13px;color:#5f826b;letter-spacing:0.548px;">used in index calculations because of table bounds.</span>
<span id="t85" class="t m" style="left:818px;top:712.5px;line-height:20px;font-size:13px;color:#4b5059;width:30px;text-align:right;letter-spacing:-0.800px;">336</span>
<svg style="position:absolute;left:870px;top:712.5px;" width="16" height="16" viewBox="0 0 16 16" fill="none"><circle cx="8" cy="8" r="2.600" stroke="#ced0d6" stroke-width="1.100"/><path d="M10.600 5.200v4.300a1.800 1.800 0 0 0 3.600 0V8a6.200 6.200 0 1 0-2.800 5.200" stroke="#ced0d6" stroke-width="1.100"/></svg>
<span id="t86" class="t m" style="left:888px;top:710.5px;line-height:22px;font-size:14px;color:#bcbec4;"><i> </i><i> </i><i> </i><i> </i><span class="k"><i>s</i><i>t</i><i>a</i><i>t</i><i>i</i><i>c</i></span><i> </i><span class="k"><i>f</i><i>i</i><i>n</i><i>a</i><i>l</i></span><i> </i><span class="k"><i>i</i><i>n</i><i>t</i></span><i> </i><span class="f"><i>h</i><i>a</i><i>s</i><i>h</i></span><i>(</i><i>O</i><i>b</i><i>j</i><i>e</i><i>c</i><i>t</i><i> </i><i>k</i><i>e</i><i>y</i><i>)</i><i> </i><i>{</i></span>
<span id="t87" class="t m" style="left:818px;top:734.5px;line-height:20px;font-size:13px;color:#4b5059;width:30px;text-align:right;letter-spacing:-0.800px;">337</span>
<span id="t88" class="t m" style="left:888px;top:732.5px;line-height:22px;font-size:14px;color:#bcbec4;"><i> </i><i> </i><i> </i><i> </i><i> </i><i> </i><i> </i><i> </i><span class="k"><i>i</i><i>n</i><i>t</i></span><i> </i><i>h</i><i>;</i></span>
<span id="t89" class="t m" style="left:818px;top:756.5px;line-height:20px;font-size:13px;color:#a1a3ab;width:30px;text-align:right;letter-spacing:-0.800px;">338</span>
<span id="t90" class="t m" style="left:888px;top:754.5px;line-height:22px;font-size:14px;color:#bcbec4;"><i> </i><i> </i><i> </i><i> </i><i> </i><i> </i><i> </i><i> </i><span class="k"><i>r</i><i>e</i><i>t</i><i>u</i><i>r</i><i>n</i></span><i> </i><i>(</i><i>k</i><i>e</i><i>y</i><i> </i><i>=</i><i>=</i><i> </i><span class="k"><i>n</i><i>u</i><i>l</i><i>l</i></span><i>)</i><i> </i><i>?</i><i> </i><span class="n"><i>0</i></span><i> </i><i>:</i><i> </i><i>(</i><i>h</i><i> </i><i>=</i><i> </i><i>k</i><i>e</i><i>y</i><i>.</i><span class="hl"><i>h</i><i>a</i><i>s</i><i>h</i><i>C</i><i>o</i><i>d</i><i>e</i></span><span style="background:#43454a"><i>(</i><i>)</i></span><i>)</i><i> </i><i>^</i><i> </i><i>(</i><i>h</i><i> </i><i>&gt;</i><i>&gt;</i><i>&gt;</i><i> </i><span class="n"><i>1</i><i>6</i></span><i>)</i><i>;</i></span>
<span id="t91" class="t m" style="left:818px;top:778.5px;line-height:20px;font-size:13px;color:#4b5059;width:30px;text-align:right;letter-spacing:-0.800px;">339</span>
<span id="t92" class="t m" style="left:888px;top:776.5px;line-height:22px;font-size:14px;color:#bcbec4;"><i> </i><i> </i><i> </i><i> </i><i>}</i></span>
<span id="t93" class="t m" style="left:818px;top:800.5px;line-height:20px;font-size:13px;color:#4b5059;width:30px;text-align:right;letter-spacing:-0.800px;">340</span>
<span id="t94" class="t s" style="left:934px;top:827.0px;line-height:20px;font-size:13px;color:#5f826b;letter-spacing:0.461px;">Returns x&#x27;s Class if it is of the form &quot;class C implements Comparable&quot;, else null.</span>
<span id="t95" class="t m" style="left:818px;top:859.5px;line-height:20px;font-size:13px;color:#4b5059;width:30px;text-align:right;letter-spacing:-0.800px;">345</span>
<svg style="position:absolute;left:870px;top:859.5px;" width="16" height="16" viewBox="0 0 16 16" fill="none"><circle cx="8" cy="8" r="2.600" stroke="#ced0d6" stroke-width="1.100"/><path d="M10.600 5.200v4.300a1.800 1.800 0 0 0 3.600 0V8a6.200 6.200 0 1 0-2.800 5.200" stroke="#ced0d6" stroke-width="1.100"/></svg>
<span id="t96" class="t m" style="left:888px;top:857.5px;line-height:22px;font-size:14px;color:#bcbec4;"><i> </i><i> </i><i> </i><i> </i><span class="k"><i>s</i><i>t</i><i>a</i><i>t</i><i>i</i><i>c</i></span><i> </i><i>C</i><i>l</i><i>a</i><i>s</i><i>s</i><i>&lt;</i><i>?</i><i>&gt;</i><i> </i><span class="f"><i>c</i><i>o</i><i>m</i><i>p</i><i>a</i><i>r</i><i>a</i><i>b</i><i>l</i><i>e</i><i>C</i><i>l</i><i>a</i><i>s</i><i>s</i><i>F</i><i>o</i><i>r</i></span><i>(</i><i>O</i><i>b</i><i>j</i><i>e</i><i>c</i><i>t</i><i> </i><i>x</i><i>)</i><i> </i><i>{</i></span>
<div style="position:absolute;left:804px;top:879px;width:723px;height:24px;overflow:hidden">
<span id="t97" class="t m" style="left:14px;top:2.5px;line-height:20px;font-size:13px;color:#4b5059;width:30px;text-align:right;letter-spacing:-0.800px;">346</span>
<span id="t98" class="t m" style="left:84px;top:0.5px;line-height:22px;font-size:14px;color:#bcbec4;"><i> </i><i> </i><i> </i><i> </i><i> </i><i> </i><i> </i><i> </i><span class="k"><i>i</i><i>f</i></span><i> </i><i>(</i><i>x</i><i> </i><span class="k"><i>i</i><i>n</i><i>s</i><i>t</i><i>a</i><i>n</i><i>c</i><i>e</i><i>o</i><i>f</i></span><i> </i><i>C</i><i>o</i><i>m</i><i>p</i><i>a</i><i>r</i><i>a</i><i>b</i><i>l</i><i>e</i><i>)</i><i> </i><i>{</i></span>
</div>
<div style="position:absolute;left:889px;top:893px;width:467px;height:8px;background:rgba(255,255,255,0.170);"></div>
<span class="t c" style="left:1449.5px;top:683.7px;color:#dfe1e5;">阅读器模式</span>
<div style="position:absolute;left:1518px;top:727px;width:8px;height:26px;background:#4d4f53;"></div>
<div style="position:absolute;left:804px;top:902px;width:52px;height:3px;border-radius:1.500px;background:#3574f0"></div>
<span class="t c" style="left:818px;top:913.7px;color:#dfe1e5;">预览</span>
<span class="t c" style="left:870px;top:913.7px;color:#dfe1e5;">调用层次结构</span>
<svg style="position:absolute;left:13px;top:952px;" width="10" height="10" viewBox="0 0 10 10" fill="none"><rect x="1.200" y="1.200" width="7" height="7" rx="1.300" stroke="#548af7" stroke-width="1.300" fill="#25324d"/></svg>
<span id="t99" class="t s" style="left:26.5px;top:947.0px;line-height:20px;font-size:13px;color:#a8adb5;letter-spacing:0.420px;">src.zip</span>
<svg style="position:absolute;left:74px;top:952px;" width="10" height="10" viewBox="0 0 10 10" fill="none"><path d="M3 1.500l3.500 3.500L3 8.500" stroke="#868a91" stroke-width="1.100"/></svg>
<span id="t100" class="t s" style="left:91px;top:947.0px;line-height:20px;font-size:13px;color:#a8adb5;letter-spacing:0.035px;">java</span>
<svg style="position:absolute;left:122px;top:952px;" width="10" height="10" viewBox="0 0 10 10" fill="none"><path d="M3 1.500l3.500 3.500L3 8.500" stroke="#868a91" stroke-width="1.100"/></svg>
<span id="t101" class="t s" style="left:139px;top:947.0px;line-height:20px;font-size:13px;color:#a8adb5;letter-spacing:0.594px;">util</span>
<svg style="position:absolute;left:165px;top:952px;" width="10" height="10" viewBox="0 0 10 10" fill="none"><path d="M3 1.500l3.500 3.500L3 8.500" stroke="#868a91" stroke-width="1.100"/></svg>
<svg style="position:absolute;left:182px;top:949px;" width="16" height="16" viewBox="0 0 16 16" fill="none"><circle cx="8" cy="8" r="6.500" stroke="#548af7" stroke-width="1.100" fill="#25324d"/><path d="M10.300 6.300a2.900 2.900 0 1 0 0 3.400" stroke="#548af7" stroke-width="1.100"/></svg>
<span id="t102" class="t s" style="left:202px;top:947.0px;line-height:20px;font-size:13px;color:#a8adb5;letter-spacing:0.480px;">HashMap</span>
<span id="t103" class="t s" style="left:1338px;top:947.0px;line-height:20px;font-size:13px;color:#a8adb5;letter-spacing:0.372px;">120:22</span>
<span id="t104" class="t s" style="left:1396px;top:947.0px;line-height:20px;font-size:13px;color:#6f737a;letter-spacing:-0.488px;">CRLF</span>
<span id="t105" class="t s" style="left:1444px;top:947.0px;line-height:20px;font-size:13px;color:#a8adb5;letter-spacing:0.631px;">UTF-8</span>
<span id="t106" class="t s" style="left:1500px;top:947.0px;line-height:20px;font-size:13px;color:#a8adb5;">4</span>
<span class="t c" style="left:1511px;top:946.7px;color:#a8adb5;">个空</span>
<span id="t107" class="t s" style="left:1537.5px;top:947.0px;line-height:20px;font-size:13px;color:#a8adb5;">...</span>
</div></body></html>
